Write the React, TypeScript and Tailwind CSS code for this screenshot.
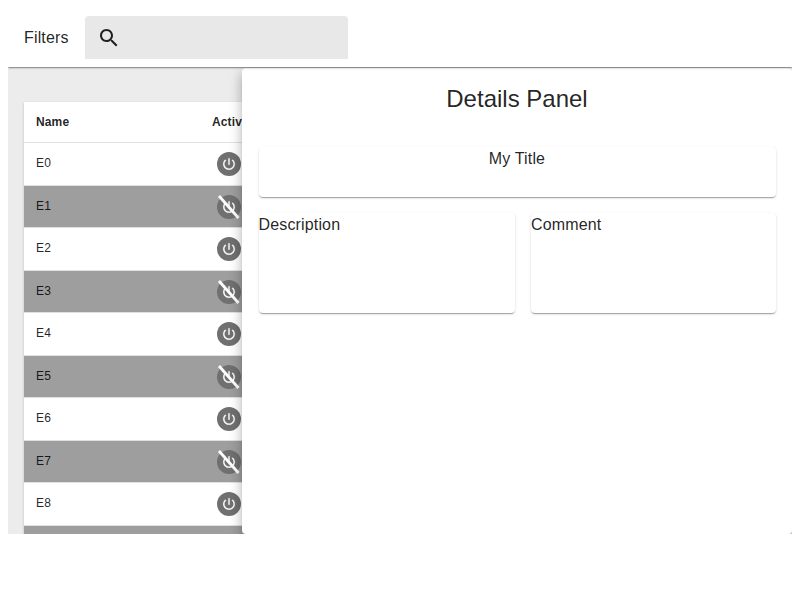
const rows = [0, 1, 2, 3, 4, 5, 6, 7, 8];

const paper =
  "bg-white shadow-[0px_2px_1px_-1px_rgba(0,0,0,0.2),0px_1px_1px_0px_rgba(0,0,0,0.14),0px_1px_3px_0px_rgba(0,0,0,0.12)]";

function PowerIcon({ off }: { off: boolean }) {
  return (
    <svg viewBox="0 0 24 24" className="block size-6">
      <circle cx="12" cy="12" r="12" fill="#707070" />
      <g transform="translate(4.2 4.2) scale(0.65)">
        <path
          fill="#fff"
          stroke="#fff"
          strokeWidth="0.25"
          d="M13 3h-2v10h2V3zm4.83 2.17-1.42 1.42C17.99 7.86 19 9.81 19 12c0 3.87-3.13 7-7 7s-7-3.13-7-7c0-2.19 1.01-4.14 2.58-5.42L6.17 5.17C4.23 6.82 3 9.26 3 12c0 4.97 4.03 9 9 9s9-4.03 9-9c0-2.74-1.23-5.18-3.17-6.83z"
        />
      </g>
      {off && <path d="M2 1 21.5 23" stroke="#fff" strokeWidth="2.8" />}
    </svg>
  );
}

export default function App() {
  return (
    <div className="h-[600px] w-[800px] overflow-hidden bg-white p-2 font-['Liberation_Sans',sans-serif] text-base tracking-[0.00938em] text-black/87">
      <div className="h-[526px] overflow-hidden">
        <header className={`relative z-20 flex h-[59px] items-center gap-4 px-4 ${paper}`}>
          <span>Filters</span>
          <div className="flex h-[43px] w-[263px] items-center rounded-t bg-[#e8e8e8] px-3">
            <svg viewBox="0 0 24 24" className="size-6">
              <path
                fill="#212121"
                d="M15.5 14h-.79l-.28-.27C15.41 12.59 16 11.11 16 9.5 16 5.91 13.09 3 9.5 3S3 5.91 3 9.5 5.91 16 9.5 16c1.61 0 3.09-.59 4.23-1.57l.27.28v.79l5 4.99L20.49 19l-4.99-5zm-6 0C7.01 14 5 11.99 5 9.5S7.01 5 9.5 5 14 7.01 14 9.5 11.99 14 9.5 14z"
              />
            </svg>
          </div>
        </header>

        <main className="relative h-[467px] overflow-hidden bg-[#ececec] px-4 pt-[35px]">
          <div className={`text-xs tracking-[0.01071em] ${paper}`}>
            <div className="flex h-[41px] items-center border-b border-[#e0e0e0] px-3 font-bold">
              <span className="w-44">Name</span>
              <span>Active</span>
            </div>
            {rows.map((n) => (
              <div
                key={n}
                className={`flex items-center border-b border-[#e0e0e0] px-3 pb-[1.5px] ${n % 2 ? "h-[42px] bg-[#9e9e9e]" : "h-[43px] bg-white"}`}
              >
                <span className="w-[181px]">E{n}</span>
                <div className="pt-0.5">
                  <PowerIcon off={n % 2 === 1} />
                </div>
              </div>
            ))}
            <div className="h-[42px] bg-[#9e9e9e]" />
          </div>

          <aside className="absolute top-px right-0 bottom-0 w-[550px] rounded bg-white px-4 text-center shadow-[0px_5px_5px_-3px_rgba(0,0,0,0.2),0px_8px_10px_1px_rgba(0,0,0,0.14),0px_3px_14px_2px_rgba(0,0,0,0.12)]">
            <h1 className="pt-[15px] text-2xl leading-8 tracking-normal">Details Panel</h1>
            <section className={`mt-8 ml-[0.5px] h-[50px] w-[517px] rounded ${paper}`}>My Title</section>
            <div className="mt-4 ml-[0.5px] flex gap-4 text-left">
              <section className={`h-[100px] w-[256.5px] rounded ${paper}`}>Description</section>
              <section className={`h-[100px] w-[245px] rounded ${paper}`}>Comment</section>
            </div>
          </aside>
        </main>
      </div>
    </div>
  );
}
